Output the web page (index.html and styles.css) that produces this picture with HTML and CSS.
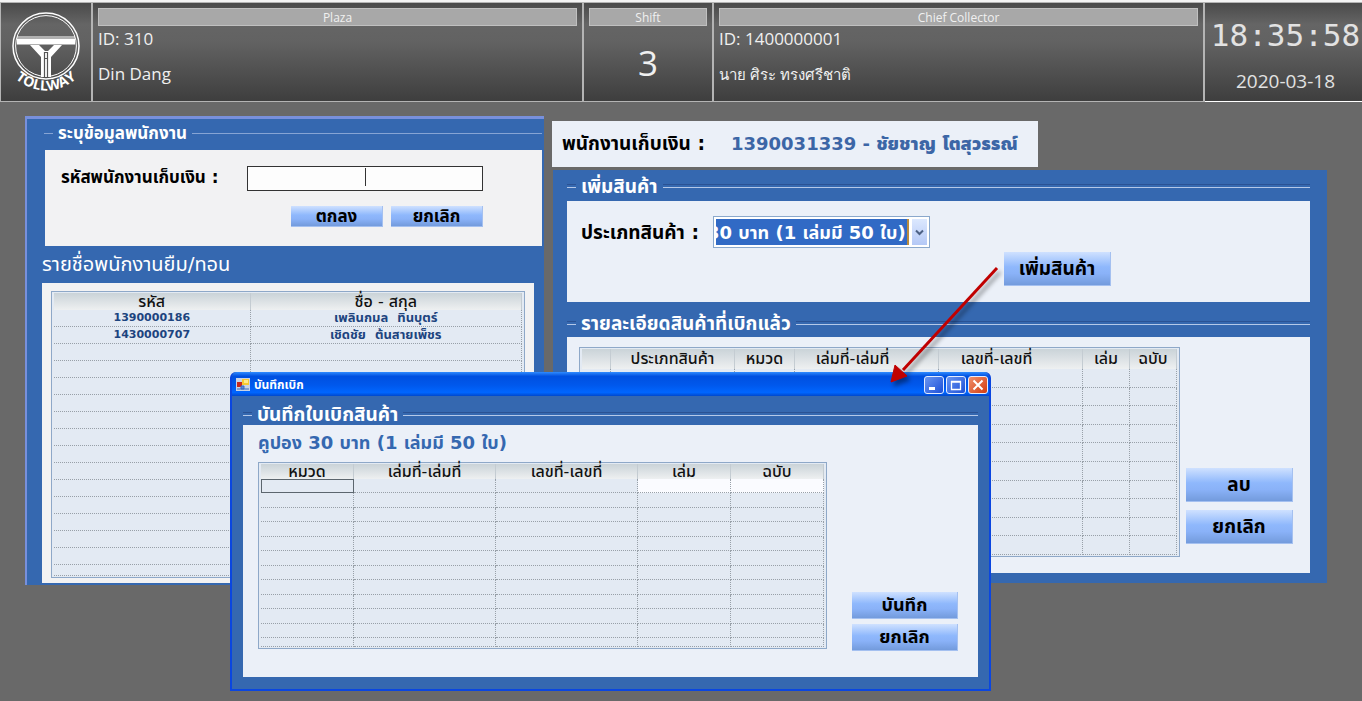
FILE: index.html
```
<!DOCTYPE html>
<html lang="th">
<head>
<meta charset="utf-8">
<title>Tollway</title>
<link rel="stylesheet" href="styles.css">
</head>
<body>
<header class="topbar">
  <div class="logo">
    <svg viewBox="0 0 90 97" width="90" height="97" role="img" aria-label="Tollway">
      <g fill="none" stroke="#fff">
        <circle cx="45" cy="43" r="33" stroke-width="1.5"/>
        <circle cx="45" cy="43" r="30.400" stroke-width="1"/>
        <path d="M16 34H74" stroke-width="1.200"/>
      </g>
      <path fill="#fff" d="M16 35.500H74V41.500H16zM29 42h9l6 6h3l6-6h8L50 54v20h-10V54z"/>
      <path fill="none" stroke="#555" stroke-width="1.200" d="M43.500 49v25M46.500 49v25M43.500 49.500h3M43.500 55.500h3"/>
      <path id="arc" fill="none" d="M10 72 Q45 103 80 72"/>
      <text class="logo-text" fill="#fff" text-anchor="middle"><textPath href="#arc" startOffset="50%">TOLLWAY</textPath></text>
    </svg>
  </div>
  <section class="cell">
    <h2 class="cap">Plaza</h2>
    <p class="info">ID: 310</p>
    <p class="info second">Din Dang</p>
  </section>
  <section class="cell">
    <h2 class="cap">Shift</h2>
    <p class="shift">3</p>
  </section>
  <section class="cell">
    <h2 class="cap">Chief Collector</h2>
    <p class="info">ID: 1400000001</p>
    <p class="info second thai-name">นาย ศิระ ทรงศรีชาติ</p>
  </section>
  <div class="clock">
    <time class="time">18:35:58</time>
    <time class="date">2020-03-18</time>
  </div>
</header>

<main class="stage">
  <section class="panel staff">
    <h3 class="legend small">ระบุข้อมูลพนักงาน</h3>
    <form class="box staff-form">
      <div class="field">
        <label for="code">รหัสพนักงานเก็บเงิน :</label>
        <span class="code-wrap"><input id="code" type="text"></span>
      </div>
      <div class="actions">
        <button type="button" class="btn sm">ตกลง</button>
        <button type="button" class="btn sm">ยกเลิก</button>
      </div>
    </form>
    <h3 class="list-title">รายชื่อพนักงานยืม/ทอน</h3>
    <div class="box staff-list">
      <table class="grid staff-grid">
        <colgroup><col class="c42"><col></colgroup>
        <thead><tr><th>รหัส</th><th>ชื่อ - สกุล</th></tr></thead>
        <tbody>
          <tr><td>1390000186</td><td class="name">เพลินกมล&nbsp; ทินบุตร์</td></tr>
          <tr><td>1430000707</td><td class="name">เชิดชัย&nbsp; ต้นสายเพ็ชร</td></tr>
          <tr><td></td><td></td></tr><tr><td></td><td></td></tr><tr><td></td><td></td></tr>
          <tr><td></td><td></td></tr><tr><td></td><td></td></tr><tr><td></td><td></td></tr>
          <tr><td></td><td></td></tr><tr><td></td><td></td></tr><tr><td></td><td></td></tr>
          <tr><td></td><td></td></tr><tr><td></td><td></td></tr><tr><td></td><td></td></tr>
          <tr><td></td><td></td></tr><tr class="cut"><td></td><td></td></tr>
        </tbody>
      </table>
    </div>
  </section>

  <div class="right">
    <p class="collector"><span>พนักงานเก็บเงิน :</span><strong>1390031339 - ชัยชาญ โตสุวรรณ์</strong></p>
    <section class="panel goods">
      <h3 class="legend">เพิ่มสินค้า</h3>
      <form class="box goods-form">
        <div class="field">
          <label for="kind">ประเภทสินค้า :</label>
          <span class="combo">
            <select id="kind"><option>30 บาท (1 เล่มมี 50 ใบ)</option></select>
            <span class="drop"><svg viewBox="0 0 9 7" width="9" height="7"><path d="M1 1.500l3.500 3.500L8 1.500" fill="none" stroke="#4d6185" stroke-width="2"/></svg></span>
          </span>
        </div>
        <button type="button" class="btn lg add">เพิ่มสินค้า</button>
      </form>
      <h3 class="legend detail">รายละเอียดสินค้าที่เบิกแล้ว</h3>
      <div class="box goods-list">
        <table class="grid goods-grid">
          <colgroup><col class="g1"><col class="g2"><col class="g3"><col class="g4"><col class="g5"><col class="g6"><col class="g7"></colgroup>
          <thead><tr><th></th><th>ประเภทสินค้า</th><th>หมวด</th><th class="lead">เล่มที่-เล่มที่</th><th class="lead">เลขที่-เลขที่</th><th>เล่ม</th><th>ฉบับ</th></tr></thead>
          <tbody>
            <tr><td></td><td></td><td></td><td></td><td></td><td></td><td></td></tr>
            <tr><td></td><td></td><td></td><td></td><td></td><td></td><td></td></tr>
            <tr><td></td><td></td><td></td><td></td><td></td><td></td><td></td></tr>
            <tr><td></td><td></td><td></td><td></td><td></td><td></td><td></td></tr>
            <tr><td></td><td></td><td></td><td></td><td></td><td></td><td></td></tr>
            <tr><td></td><td></td><td></td><td></td><td></td><td></td><td></td></tr>
            <tr><td></td><td></td><td></td><td></td><td></td><td></td><td></td></tr>
            <tr><td></td><td></td><td></td><td></td><td></td><td></td><td></td></tr>
            <tr><td></td><td></td><td></td><td></td><td></td><td></td><td></td></tr>
            <tr><td></td><td></td><td></td><td></td><td></td><td></td><td></td></tr>
          </tbody>
        </table>
        <div class="stack">
          <button type="button" class="btn lg">ลบ</button>
          <button type="button" class="btn lg">ยกเลิก</button>
        </div>
      </div>
    </section>
  </div>

  <div class="dialog" role="dialog" aria-labelledby="dlg-title">
    <div class="titlebar">
      <svg viewBox="0 0 14 13" width="14" height="13" aria-hidden="true">
        <rect width="14" height="13" fill="#c9d3e6"/>
        <rect x="1" y="4" width="5" height="5" fill="#c8281e"/>
        <rect x="6" y="1" width="7" height="6" fill="#f8c830"/>
        <rect x="8" y="2" width="4" height="3" fill="#ffe98a"/>
        <path d="M1 11h12M5 8h3v3H5z" stroke="#3a6ac0" fill="#5e8ad8"/>
      </svg>
      <h3 id="dlg-title">บันทึกเบิก</h3>
      <button type="button" class="win" aria-label="Minimize"><svg viewBox="0 0 18 16" width="18" height="16"><path d="M4 11.500h6" stroke="#fff" stroke-width="3"/></svg></button>
      <button type="button" class="win" aria-label="Maximize"><svg viewBox="0 0 18 16" width="18" height="16"><path d="M4 4.500h10M4.500 4v8.500h9V4M4 5h10" stroke="#fff" stroke-width="1.300" fill="none"/></svg></button>
      <button type="button" class="win close" aria-label="Close"><svg viewBox="0 0 18 16" width="18" height="16"><path d="M4.500 3.500l9 9M13.500 3.500l-9 9" stroke="#fff" stroke-width="2"/></svg></button>
    </div>
    <div class="dialog-body">
      <h3 class="legend">บันทึกใบเบิกสินค้า</h3>
      <div class="box dialog-box">
        <div class="dialog-main">
          <p class="coupon">คูปอง 30 บาท (1 เล่มมี 50 ใบ)</p>
          <table class="grid dialog-grid">
            <colgroup><col class="d1"><col class="d2"><col class="d2"><col class="d1"><col class="d1"></colgroup>
            <thead><tr><th>หมวด</th><th>เล่มที่-เล่มที่</th><th>เลขที่-เลขที่</th><th>เล่ม</th><th>ฉบับ</th></tr></thead>
            <tbody>
              <tr><td class="focus"></td><td></td><td></td><td class="edit"></td><td class="edit"></td></tr>
              <tr><td></td><td></td><td></td><td></td><td></td></tr>
              <tr><td></td><td></td><td></td><td></td><td></td></tr>
              <tr><td></td><td></td><td></td><td></td><td></td></tr>
              <tr><td></td><td></td><td></td><td></td><td></td></tr>
              <tr><td></td><td></td><td></td><td></td><td></td></tr>
              <tr><td></td><td></td><td></td><td></td><td></td></tr>
              <tr><td></td><td></td><td></td><td></td><td></td></tr>
              <tr><td></td><td></td><td></td><td></td><td></td></tr>
              <tr><td></td><td></td><td></td><td></td><td></td></tr>
              <tr><td></td><td></td><td></td><td></td><td></td></tr>
              <tr class="cut"><td></td><td></td><td></td><td></td><td></td></tr>
            </tbody>
          </table>
        </div>
        <div class="stack">
          <button type="button" class="btn md">บันทึก</button>
          <button type="button" class="btn md">ยกเลิก</button>
        </div>
      </div>
    </div>
  </div>

  <svg class="pointer" viewBox="0 0 120 130" width="120" height="130" aria-hidden="true">
    <path d="M112 7L18 109" stroke="#c00000" stroke-width="3"/>
    <path d="M6 121L10 104L22 115z" fill="#c00000" stroke="#c00000"/>
  </svg>
</main>
</body>
</html>
```
FILE: styles.css
```
* { box-sizing: border-box; }
body {
  margin: 0;
  min-height: 100vh;
  background: #696969;
  font-family: Tahoma, "DejaVu Sans", "Noto Sans Thai", sans-serif;
}
h2, h3, p { margin: 0; font-weight: 400; }
button, input, select { font-family: inherit; border-radius: 0; }

/* status header */
.topbar {
  display: grid;
  grid-template-columns: 93px 1fr 130px 1fr 157px;
  height: 102px;
  border-top: 2px solid #f4f4f4;
  font-family: "Open Sans", "Noto Sans", sans-serif;
  color: #f0f0f0;
}
.topbar > * {
  border: 1px solid #b4b4b4;
  border-left-width: 0;
  border-right-width: 2px;
  background: linear-gradient(#4a4a4a, #656565 22%, #626262 40%, #3e3e3e);
}
.topbar .logo { border-left-width: 1px; }
.topbar .clock { border-right-width: 0; border-bottom-color: #fff; }
.logo svg { display: block; }
.logo-text { font: 700 14px "Open Sans", sans-serif; }
.cell { padding: 5px 5px 0; }
.cap {
  height: 18px;
  border: 1px solid #c0c0c0;
  background: #a8a8a8;
  font-size: 12px;
  line-height: 17px;
  text-align: center;
}
.info { font-size: 17px; line-height: 26px; }
.second { margin-top: 9px; }
.thai-name { font-size: 15px; }
.shift { font-size: 35px; line-height: 74px; text-align: center; }
.clock { display: flex; flex-direction: column; align-items: center; padding-left: 4px; color: #e2e2e2; }
.time { font: 31px/64px "DejaVu Sans Mono", monospace; }
.date { font-size: 19px; line-height: 28px; }

/* work area */
.stage {
  position: relative;
  display: grid;
  grid-template-columns: minmax(0, 519fr) minmax(0, 775fr);
  align-items: start;
  gap: 8px;
  padding: 14px 35px 0 25px;
}
.panel { background: #3568b0; }
.staff {
  border: solid #7890dc;
  border-width: 3px 0 0 2px;
  padding: 0 2px 2px 15px;
}
.right { padding-top: 5px; }
.box { background: #ebf0f8; }
.staff .box { background: #f2f2f3; }

.legend {
  display: flex;
  align-items: center;
  gap: 5px;
  height: 31px;
  color: #fff;
  font-size: 19px;
  font-weight: 700;
  line-height: 30px;
  white-space: nowrap;
}
.legend::before, .legend::after {
  content: "";
  height: 2px;
  border-top: 1px solid #2a5294;
  border-bottom: 1px solid #b4c8e8;
}
.legend::before { width: 9px; }
.legend::after { flex: 1; }
.small { margin-left: 2px; padding-bottom: 4px; font-size: 17px; }
.small::before, .small::after { border-top: 0; height: 1px; border-bottom-color: #86a4d4; }

.staff-form { height: 96px; margin-left: 3px; padding: 15px 16px 0; }
.field { display: flex; align-items: center; }
.field label { font-weight: 700; white-space: nowrap; }
.staff-form .field { justify-content: space-between; padding-right: 43px; }
.staff-form label { font-size: 17px; }
.code-wrap { display: flex; width: 236px; height: 25px; border: 1px solid #333; }
.code-wrap input {
  width: 100%;
  border: 0;
  background: linear-gradient(#333, #333) 50% 1px / 1px 18px no-repeat #fdfdfd;
}
.actions { display: flex; justify-content: flex-end; gap: 8px; margin-top: 15px; padding-right: 43px; }
.btn {
  border: 1px solid #a4c0f0;
  border-width: 0 1px 1px 0;
  padding: 0;
  background: linear-gradient(#cfe1ff, #8fb8fc 45%, #8ab2f8 65%, #739bdc);
  color: #000;
  font-weight: 700;
  text-align: center;
}
.sm { width: 92px; height: 21px; font-size: 17px; line-height: 20px; }
.md { width: 106px; height: 27px; font-size: 18px; line-height: 26px; }
.lg { width: 107px; height: 34px; font-size: 19px; line-height: 33px; }

.list-title { height: 37px; color: #fff; font-size: 20px; line-height: 37px; }
.staff-list { height: 300px; padding: 8px 9px; margin-right: 8px; }

/* data tables */
.grid {
  border: 1px solid #8ea8c8;
  border-collapse: separate;
  border-spacing: 0;
  padding: 1px 2px;
  background: #e3eaf3;
  table-layout: fixed;
}
.grid th, .grid td { padding: 0; text-align: center; white-space: nowrap; }
.grid th {
  border-right: 1px solid #c4ccd2;
  background: linear-gradient(#cad3d8, #eef0f1);
  color: #111;
  font-size: 16px;
  font-weight: 500;
}
.grid td { border: dotted #98a0a8; border-width: 0 1px 1px 0; color: #1d447f; font-weight: 700; }
.staff-grid { width: 100%; }
.staff-grid th { height: 17px; line-height: 17px; }
.staff-grid td { height: 17px; font-size: 11px; line-height: 16px; }
.staff-grid .name { font-size: 13px; }
.staff-grid .cut td { height: 11px; }
.c42 { width: 42%; }

/* right column */
.collector {
  display: flex;
  align-items: center;
  gap: 26px;
  width: 486px;
  height: 46px;
  margin-bottom: 3px;
  padding-left: 10px;
  background: #ebf0f8;
  font-size: 17px;
  font-weight: 700;
  white-space: nowrap;
}
.collector span { font-size: 19px; }
.collector strong { color: #3c66a6; font-size: 18px; }
.goods { margin-left: 1px; padding: 0 17px 10px 14px; }
.goods .detail { height: 35px; padding-top: 6px; }
.goods-form { height: 101px; padding: 15px 14px; }
.goods-form label { width: 132px; font-size: 19px; line-height: 30px; }
.combo { display: flex; width: 217px; height: 32px; border: 1px solid #8aa8cc; padding: 2px; background: #fff; }
.combo select {
  flex: 1;
  min-width: 0;
  appearance: none;
  border: 0;
  border-right: 2px solid #b98b3c;
  padding: 0;
  background: #316ac5;
  color: #fff;
  font-size: 18px;
  font-weight: 700;
  text-indent: -9px;
}
.drop { display: grid; place-items: center; width: 15px; margin-left: 3px; background: linear-gradient(#dce8fe, #b4c8f6); }
.add { display: block; margin: 4px 0 0 423px; }
.goods-list { display: flex; justify-content: space-between; height: 236px; padding: 10px 17px 0 12px; }
.goods-grid { width: 601px; height: 210px; }
.goods-grid th { height: 20px; line-height: 20px; }
.goods-grid .lead { padding-right: 28px; }
.g1 { width: 29px; } .g2 { width: 124px; } .g3 { width: 60px; }
.g4 { width: 144px; } .g5 { width: 144px; } .g6 { width: 47px; } .g7 { width: 47px; }
.stack { display: flex; flex-direction: column; }
.goods .stack { gap: 8px; padding-top: 121px; }

/* floating window */
.dialog {
  position: absolute;
  left: 230px;
  top: 270px;
  width: 761px;
  border: solid #0a46e0;
  border-width: 0 2px 2px;
  border-radius: 6px 6px 0 0;
  background: #3568b0;
}
.titlebar {
  display: flex;
  align-items: center;
  gap: 2px;
  height: 24px;
  padding: 1px 1px 0 4px;
  border-radius: 5px 5px 0 0;
  background: linear-gradient(#2f8bff, #0050e0 18%, #0058ec 55%, #0066ff 85%, #0048cc);
}
.titlebar h3 { flex: 1; padding-left: 2px; color: #fff; font-size: 12px; font-weight: 700; }
.win {
  display: grid;
  place-items: center;
  width: 20px;
  height: 18px;
  padding: 0;
  border: 1px solid #e4ecff;
  border-radius: 3px;
  background: linear-gradient(135deg, #6b96f0, #1c4fd8);
}
.close { background: linear-gradient(135deg, #f0906c, #d23c10); }
.dialog-body { padding: 0 11px 12px; }
.dialog-body .legend { height: 29px; padding-top: 6px; }
.dialog-box { display: flex; justify-content: space-between; height: 252px; padding: 3px 20px 0 15px; }
.coupon { height: 34px; color: #3568b0; font-size: 18px; font-weight: 700; line-height: 30px; }
.dialog-grid { width: 569px; }
.dialog-grid th { height: 15px; line-height: 15px; }
.dialog-grid td { height: 14px; }
.dialog-grid tr:nth-child(even) td { height: 15px; }
.dialog-grid .cut td, .dialog-grid tr.cut:nth-child(even) td { height: 9px; }
.dialog-grid .focus { border: 1px solid #5c666e; }
.dialog-grid .edit { background: #fafbff; }
.d1 { width: 93px; }
.d2 { width: 142px; }
.dialog-box .stack { gap: 5px; padding-top: 164px; }

.pointer { position: absolute; left: 885px; top: 159px; filter: drop-shadow(3px 4px 2px rgba(0, 0, 0, .4)); pointer-events: none; }
```
